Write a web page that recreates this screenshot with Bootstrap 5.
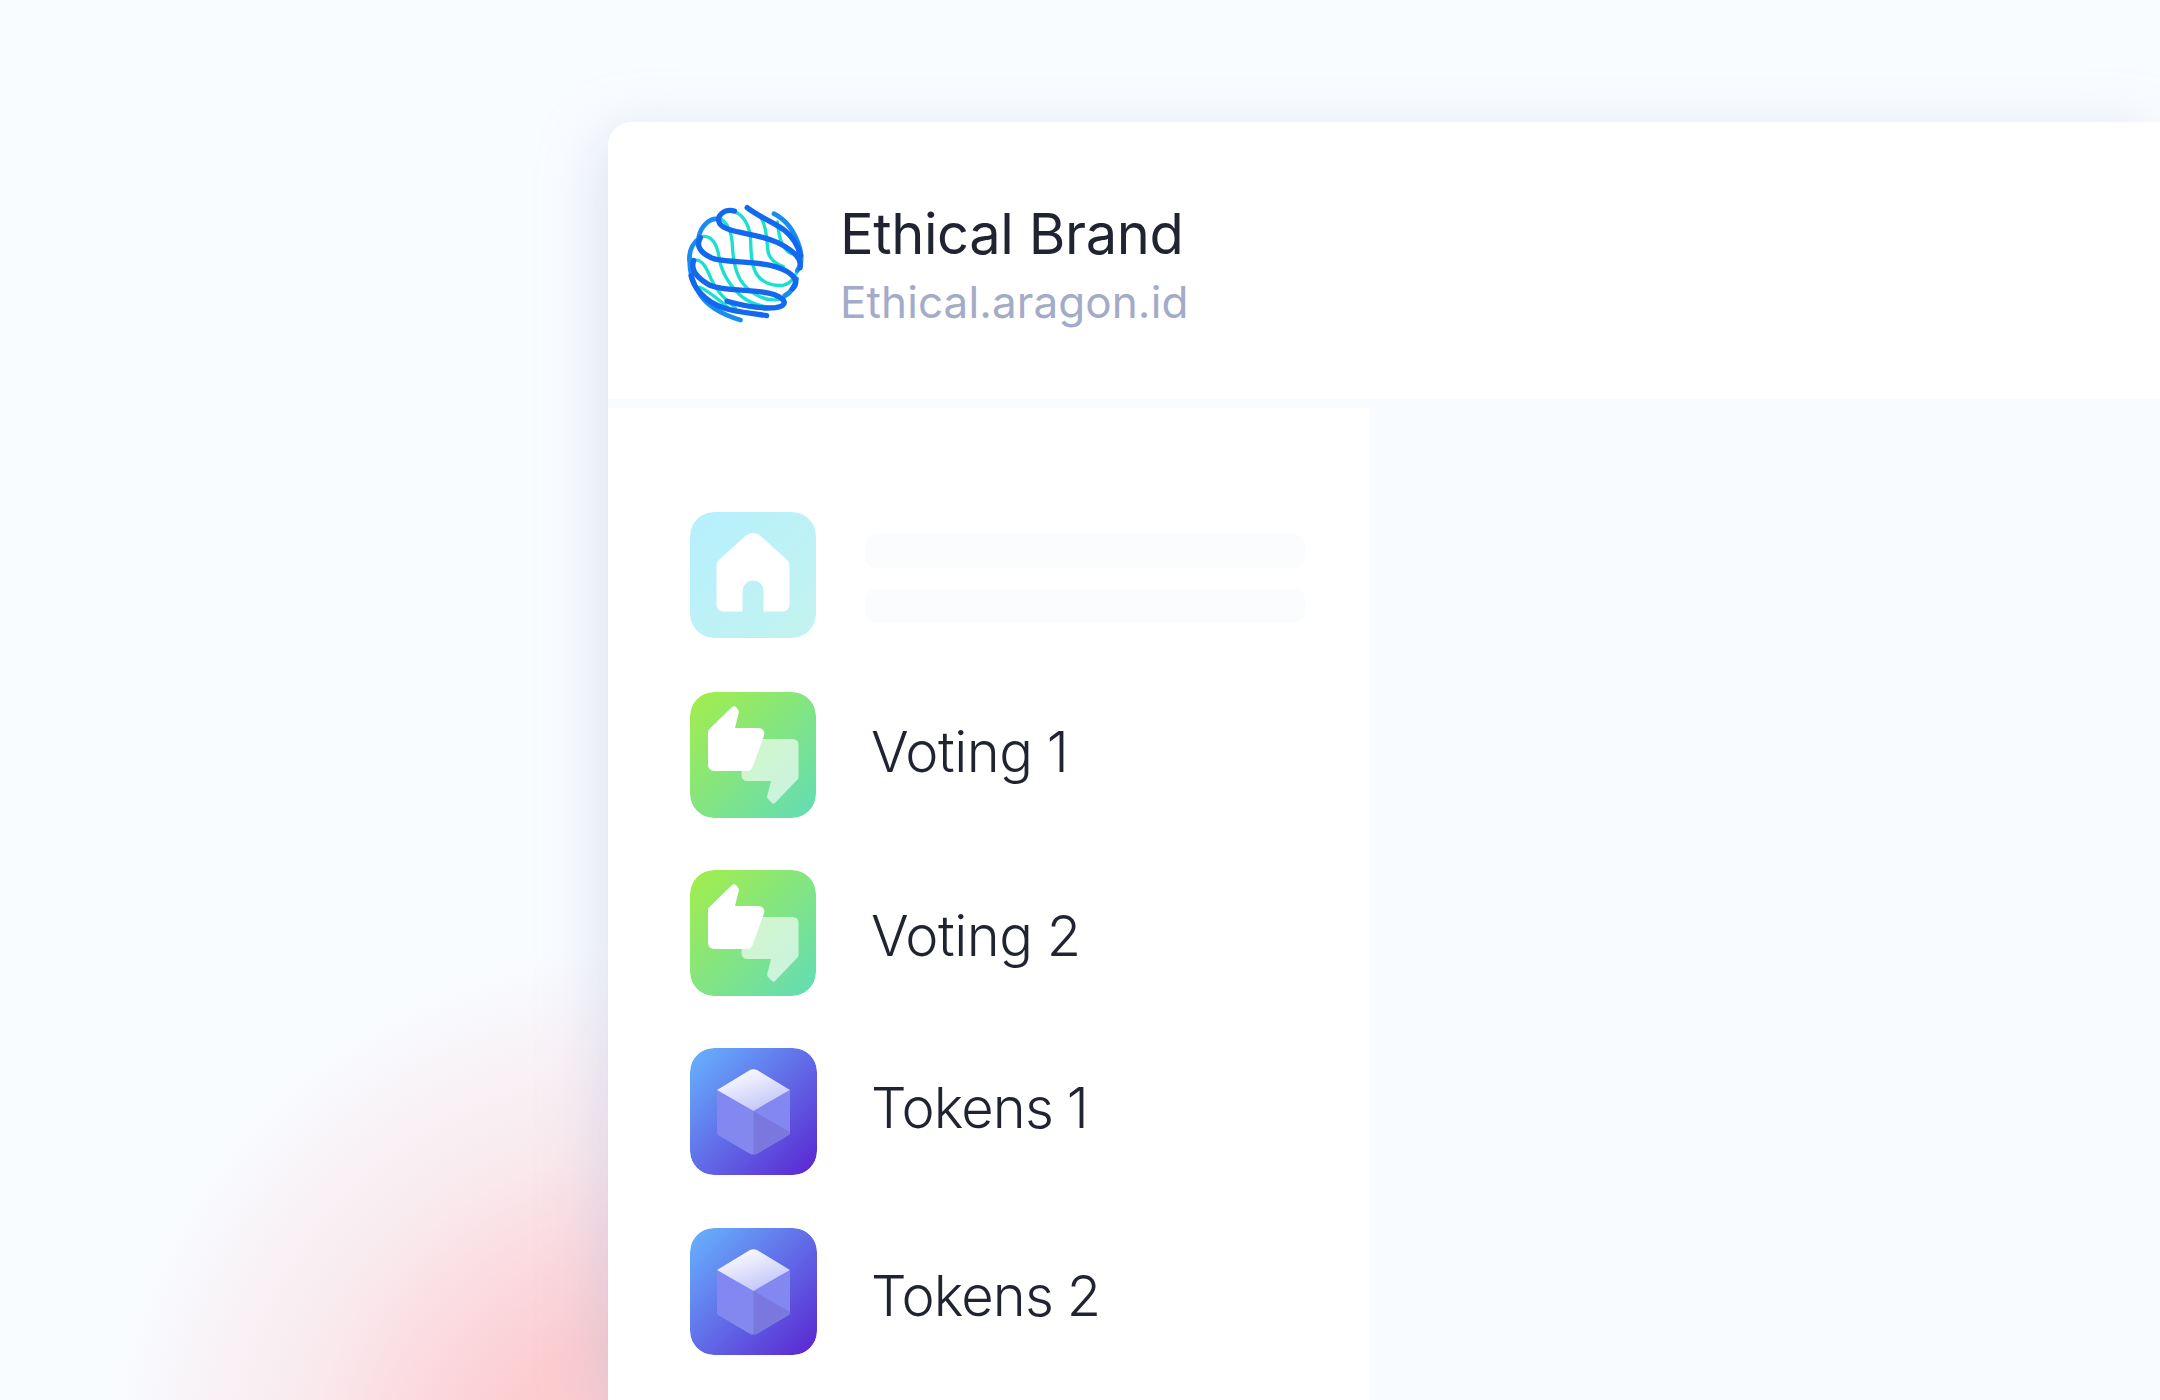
<!DOCTYPE html>
<html lang="en">
<head>
<meta charset="utf-8">
<title>Ethical Brand</title>
<link href="https://cdn.jsdelivr.net/npm/bootstrap@5.3.0/dist/css/bootstrap.min.css" rel="stylesheet">
<style>
html,body{height:1400px;overflow:hidden}
body{font-family:Inter,"Liberation Sans",sans-serif;color:#1f2430;
background-color:#f9fcff;
background-image:radial-gradient(circle 550px at 645px 1490px,#fdcacc 0%,#fccdd0 29%,#fbdae0 46%,#f9e9ed 63%,#f8f5f9 86%,rgba(249,252,255,0) 100%);
padding:122px 0 0 608px}
.app-shell{width:1552px;height:1278px;background:#f8fbff;border-top-left-radius:24px;box-shadow:-8px 12px 60px rgba(170,180,215,.34)}
.brand-bar{height:277px;background:#fff;border-top-left-radius:24px;padding-left:79px;gap:37px}
.brand-mark{flex:none;margin-top:4px}
.brand-text{margin-top:19px;margin-left:-1px}
.brand-name{font-size:56px;line-height:64px;font-weight:400;letter-spacing:-.4px;white-space:nowrap}
.brand-url{font-size:44px;line-height:72px;font-weight:400;letter-spacing:.1px;color:#a3abc9;white-space:nowrap}
.side-panel{width:762px;margin-top:9px;background:#fff;padding:104px 0 0 82px;min-height:992px}
.side-row{height:126px;gap:56px}
.row-gap-54{margin-bottom:54px}
.row-gap-52{margin-bottom:52px}
.row-big{height:127px;margin-bottom:53px}
.tile{width:126px;height:126px;border-radius:24px;flex:none;display:block}
.row-big .tile{width:127px;height:127px}
.row-label{font-size:56px;font-weight:350;letter-spacing:-.5px;word-spacing:-1px;line-height:70px;white-space:nowrap;margin-left:-1px}
.row-big .row-label{margin-left:-2px;letter-spacing:-.85px}
.nudge-up-7{margin-bottom:7px}
.nudge-down-5{margin-top:5px}
.nudge-up-8{margin-bottom:8px}
.nudge-down-8{margin-top:8px}
.skel-stack{width:440px;gap:21px;margin-left:-7px;margin-top:6px}
.skel-bar{height:34px;border-radius:10px;background:#fbfcfe}
</style>
</head>
<body>
<svg width="0" height="0" class="position-absolute">
<defs>
<linearGradient id="gh" x1="0" y1="0" x2="1" y2="1"><stop offset="0" stop-color="#b6f0fe"/><stop offset="1" stop-color="#c3f3ee"/></linearGradient>
<linearGradient id="gv" x1="0" y1="0" x2="1" y2="1"><stop offset="0" stop-color="#a4ee4a"/><stop offset="1" stop-color="#62dcb8"/></linearGradient>
<linearGradient id="gt" x1="0" y1="0" x2="1" y2="1"><stop offset="0" stop-color="#68b4ff"/><stop offset="1" stop-color="#5a24d0"/></linearGradient>
<linearGradient id="gc" x1="0.2" y1="0" x2="0.8" y2="1"><stop offset="0" stop-color="#fff"/><stop offset="1" stop-color="#bcc0f8"/></linearGradient>
<symbol id="vote" viewBox="0 0 126 126">
<rect width="126" height="126" rx="24" fill="url(#gv)"/>
<path d="M60 47h43a5.500 5.500 0 0 1 5.500 5.500V85c0 1-.5 2-1.300 2.800L85 111c-1 1-2 1-3 0l-4-4c-.7-.7-1-2-.8-3L81 89H57a5.500 5.500 0 0 1-5.500-5.500V76z" fill="#fff" opacity=".63"/>
<path d="M42 15c1-1 3-1 4 0l2 2.500c.8 1 1 2 .8 3L45 36h24a5.500 5.500 0 0 1 5 7.500L63 74c-1 3-3 5-6 5H24a6 6 0 0 1-6-6V40c0-1 .5-2 1.200-2.800z" fill="#fff"/>
</symbol>
<symbol id="cube" viewBox="0 0 127 127">
<rect width="127" height="127" rx="24" fill="url(#gt)"/>
<path d="M27 42l36.500 21v43c-1 .5-2 .5-3 0L30 88c-2-1-3-2-3-4z" fill="#8287f2"/>
<path d="M100 42L63.500 63v43c1 .5 2 .5 3 0L97 88c2-1 3-2 3-4z" fill="#8287f2"/>
<path d="M63.500 63L100 84c0 2-1 3-3 4l-30.500 18c-1 .5-2 .5-3 0z" fill="#7a78de"/>
<path d="M27 84L63.500 63v43c-1 .5-2 .5-3 0L30 88c-2-1-3-2-3-4z" fill="#8288ee"/>
<path d="M27 42l33-20c2-1 5-1 7 0l33 20-36.500 21z" fill="url(#gc)"/>
</symbol>
</defs>
</svg>
<div class="app-shell">
<header class="brand-bar d-flex align-items-center">
<svg class="brand-mark" width="117" height="122" viewBox="80 65 350 365" fill="none" stroke-linecap="round" stroke-linejoin="round">
<g stroke="#1cdfcf" stroke-width="10">
<path d="M175 112C200 125 212 150 215 185C217 215 218 260 240 298C260 330 300 358 340 358C365 358 385 345 392 330"/>
<path d="M210 92C245 95 265 130 270 170C272 200 268 240 285 275C300 305 335 318 368 314C390 310 408 285 412 262"/>
<path d="M128 168C155 165 170 195 175 225C180 265 200 305 235 340C265 368 310 382 350 380"/>
<path d="M100 240C125 232 140 265 152 295C165 325 190 355 225 382"/>
<path d="M118 320C145 330 170 355 205 382"/>
<path d="M298 108C318 135 318 175 322 210C325 235 345 250 368 258"/>
<path d="M350 125C355 160 358 190 380 212C390 220 402 222 412 216"/>
</g>
<g stroke="#1a8cf0" stroke-width="14">
<path d="M172 116C150 112 122 135 115 170"/>
<path d="M118 172C95 190 85 215 88 240"/>
<path d="M88 230C86 265 95 305 118 340C140 375 180 400 240 418"/>
<path d="M340 100C380 120 405 160 418 205C425 235 422 255 410 270"/>
<path d="M408 295C402 320 392 335 372 345"/>
</g>
<g stroke="#1268ee" stroke-width="16">
<path d="M260 82C295 110 340 125 372 150C395 168 410 190 420 225"/>
<path d="M222 92C190 84 165 108 178 130C200 160 285 155 350 186C395 208 425 235 418 262"/>
<path d="M120 172C105 195 120 222 165 236C215 248 290 240 350 260C395 275 420 300 395 325"/>
<path d="M100 240C90 265 105 290 150 315C200 335 280 322 340 342C375 355 385 375 345 381C300 385 255 378 200 362"/>
<path d="M92 285C100 320 130 362 190 382C230 395 280 398 318 405"/>
</g>
</svg>
<div class="brand-text">
<div class="brand-name">Ethical Brand</div>
<div class="brand-url">Ethical.aragon.id</div>
</div>
</header>
<nav class="side-panel">
<div class="side-row row-gap-54 d-flex align-items-center">
<svg class="tile" viewBox="0 0 126 126"><rect width="126" height="126" rx="24" fill="url(#gh)"/><path d="M56 23.500c4-3.500 10-3.500 14 0L96 47c2.500 2 3.500 4 3.500 7v39a6.500 6.500 0 0 1-6.500 6.500H73.500V79a10.500 10.500 0 0 0-21 0v20.500H33a6.500 6.500 0 0 1-6.500-6.500V54c0-3 1-5 3.500-7z" fill="#fff"/></svg>
<div class="skel-stack d-flex flex-column"><div class="skel-bar"></div><div class="skel-bar"></div></div>
</div>
<div class="side-row row-gap-52 d-flex align-items-center"><svg class="tile"><use href="#vote"/></svg><span class="row-label nudge-up-7">Voting 1</span></div>
<div class="side-row row-gap-52 d-flex align-items-center"><svg class="tile"><use href="#vote"/></svg><span class="row-label nudge-down-5">Voting 2</span></div>
<div class="side-row row-big d-flex align-items-center"><svg class="tile"><use href="#cube"/></svg><span class="row-label nudge-up-8">Tokens 1</span></div>
<div class="side-row row-big d-flex align-items-center"><svg class="tile"><use href="#cube"/></svg><span class="row-label nudge-down-8">Tokens 2</span></div>
</nav>
</div>
<script src="https://cdn.jsdelivr.net/npm/bootstrap@5.3.0/dist/js/bootstrap.bundle.min.js"></script>
</body>
</html>
